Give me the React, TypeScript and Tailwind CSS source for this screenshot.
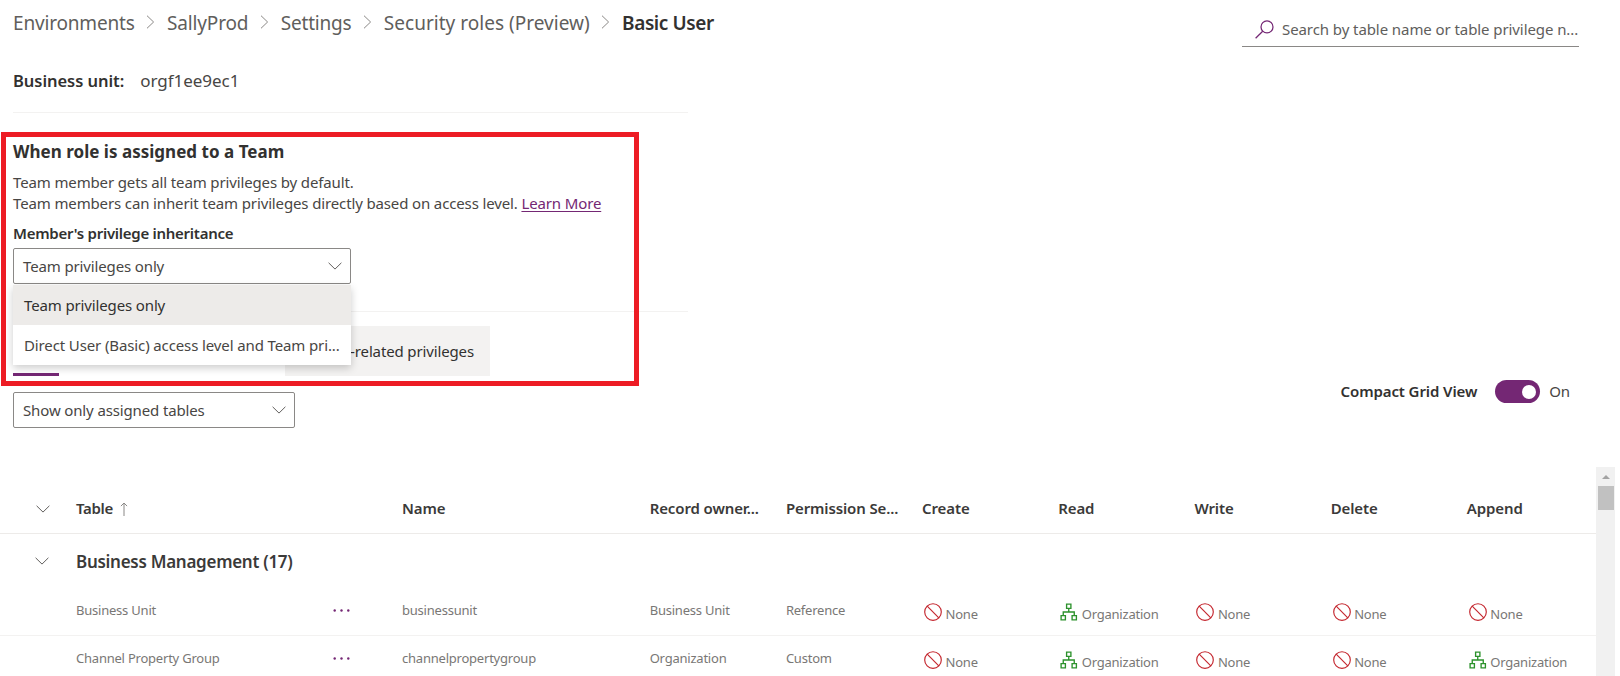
import type { ReactNode } from 'react';

type Access = 'None' | 'Organization';

interface Row {
  table: string;
  name: string;
  owner: string;
  settings: string;
  access: Access[];
}

const rows: Row[] = [
  {
    table: 'Business Unit',
    name: 'businessunit',
    owner: 'Business Unit',
    settings: 'Reference',
    access: ['None', 'Organization', 'None', 'None', 'None'],
  },
  {
    table: 'Channel Property Group',
    name: 'channelpropertygroup',
    owner: 'Organization',
    settings: 'Custom',
    access: ['None', 'Organization', 'None', 'None', 'Organization'],
  },
];

const columns = ['Name', 'Record owner...', 'Permission Se...', 'Create', 'Read', 'Write', 'Delete', 'Append'];

const gridColumns =
  'grid grid-cols-[76px_326px_247.7px_136.2px_136.2px_136.2px_136.2px_136.2px_136.2px_129px] items-center';

function ChevronRight() {
  return (
    <svg className="mx-[11.7px] mb-[2px] shrink-0" width="9" height="14" viewBox="0 0 9 14" fill="none" stroke="#8a8886">
      <path d="M1 0.7 7.6 7 1 13.3" />
    </svg>
  );
}

function ChevronDown({ className = '' }: { className?: string }) {
  return (
    <svg className={`shrink-0 ${className}`} width="14" height="8" viewBox="0 0 14 8" fill="none" stroke="#605e5c">
      <path d="M0.6 0.8 7 7.1 13.4 0.8" />
    </svg>
  );
}

function SearchIcon() {
  return (
    <svg className="shrink-0" width="19" height="19" viewBox="0 0 19 19" fill="none" stroke="#742774" strokeWidth="1.25">
      <circle cx="12" cy="6.9" r="6" />
      <path d="M7.7 11.2 0.6 18.3" />
    </svg>
  );
}

function NoneIcon() {
  return (
    <svg width="18" height="18" viewBox="0 0 18 18" fill="none" stroke="#c4262e" strokeWidth="1.15">
      <circle cx="9" cy="9" r="8.3" />
      <path d="M3.2 3.2 14.8 14.8" />
    </svg>
  );
}

function OrganizationIcon() {
  return (
    <svg width="18" height="18" viewBox="0 0 18 18" fill="none" stroke="#2c922c" strokeWidth="1.35">
      <path d="M6.6 1.1h4.3v4.3H6.6zM1.1 12.6h4.3v4.3H1.1zM12.1 12.6h4.3v4.3h-4.3z" />
      <path d="M8.75 5.4v3.6M3.25 12.6V9h11v3.6" />
    </svg>
  );
}

function AccessCell({ level }: { level: Access }) {
  return (
    <div className="flex items-center gap-[3.5px] pl-[2px]">
      {level === 'None' ? <NoneIcon /> : <OrganizationIcon />}
      <span className="pt-[6px]">{level}</span>
    </div>
  );
}

function Select({ className, children }: { className: string; children: ReactNode }) {
  return (
    <div
      className={`flex h-[36px] items-center justify-between rounded-[2px] border border-[#8a8886] bg-white pr-[8px] pl-[9px] text-[#484644] ${className}`}
    >
      {children}
      <ChevronDown />
    </div>
  );
}

export default function App() {
  return (
    <div className="relative flex h-[676px] w-[1620px] flex-col overflow-hidden bg-white font-['Noto_Sans',sans-serif] text-[15px] leading-[21px] tracking-[-0.135px] text-[#484644]">
      <header className="flex h-[47px] items-start justify-between pr-[41px] pl-[13px]">
        <nav className="flex h-[46px] items-center text-[19px] tracking-[-0.15px] whitespace-nowrap text-[#605e5c]">
          <span className="tracking-[-0.18px]">Environments</span>
          <ChevronRight />
          <span>SallyProd</span>
          <ChevronRight />
          <span className="tracking-[-0.2px]">Settings</span>
          <ChevronRight />
          <span className="tracking-[0.02px]">Security roles (Preview)</span>
          <ChevronRight />
          <span className="pt-px font-semibold tracking-[-0.4px] text-[#323130]">Basic User</span>
        </nav>
        <div className="mt-[13px] flex h-[34px] w-[337px] items-center gap-[8px] border-b border-[#8a8886] pl-[13px] whitespace-nowrap text-[#605e5c]">
          <SearchIcon />
          <span className="tracking-[-0.08px]">Search by table name or table privilege n...</span>
        </div>
      </header>

      <section className="ml-[13px] flex h-[66px] w-[675px] items-center gap-[16px] border-b border-[#f3f2f1] pt-px">
        <span className="text-[16.5px] font-semibold tracking-[-0.05px] text-[#323130]">Business unit:</span>
        <span className="text-[17px] tracking-[-0.03px]">orgf1ee9ec1</span>
      </section>

      <section className="ml-[13px] flex h-[199px] w-[675px] flex-col border-b border-[#f3f2f1] pt-[28px]">
        <h2 className="text-[17px] font-bold tracking-[0.02px] text-[#323130]">When role is assigned to a Team</h2>
        <p className="mt-[10px]">Team member gets all team privileges by default.</p>
        <p>
          Team members can inherit team privileges directly based on access level.{' '}
          <a className="text-[#742774] underline underline-offset-2">Learn More</a>
        </p>
        <div className="mt-[9px] font-semibold tracking-[-0.27px] text-[#323130]">Member's privilege inheritance</div>
        <div className="relative mt-[4px] w-[338px]">
          <Select className="w-[338px]">Team privileges only</Select>
          <div className="absolute top-[37px] left-0 z-10 w-[338px] bg-white shadow-[0_3px_8px_rgba(0,0,0,0.2)]">
            <div className="flex h-[40px] items-center bg-[#edebe9] pl-[11px] text-[#323130]">Team privileges only</div>
            <div className="flex h-[40px] items-center pl-[11px] tracking-[-0.12px] whitespace-nowrap">
              Direct User (Basic) access level and Team pri...
            </div>
          </div>
        </div>
      </section>

      <div className="mt-[14px] ml-[13px] flex h-[50px] items-stretch">
        <div className="mr-[226px] w-[46px] border-b-[3px] border-[#742774]" />
        <div className="flex w-[205px] items-center justify-end bg-[#f3f2f1] pr-[16px] text-[#323130]">
          -related privileges
        </div>
      </div>

      <div className="flex h-[91px] items-start justify-between pt-[16px] pr-[50px] pl-[13px]">
        <Select className="w-[282px]">Show only assigned tables</Select>
        <div className="-mt-[12px] flex h-[23px] items-center">
          <span className="font-semibold tracking-[-0.1px] text-[#323130]">Compact Grid View</span>
          <span className="ml-[18px] flex h-[23px] w-[45px] items-center justify-end rounded-full bg-[#742774] pr-[4px]">
            <span className="h-[14px] w-[14px] rounded-full bg-white" />
          </span>
          <span className="ml-[9px]">On</span>
        </div>
      </div>

      <div className="flex h-[209px]">
        <div className="w-[1596px] whitespace-nowrap">
          <div className={`${gridColumns} h-[67px] border-b border-[#edebe9] pt-[17px] font-semibold tracking-[-0.12px] text-[#3b3a39]`}>
            <ChevronDown className="ml-[36px]" />
            <div className="flex items-center gap-[7px]">
              <span className="tracking-[-0.3px]">Table</span>
              <svg width="8" height="14" viewBox="0 0 8 14" fill="none" stroke="#8a8886">
                <path d="M4 14V1M0.9 4.1 4 1l3.1 3.1" />
              </svg>
            </div>
            {columns.map((c) => (
              <div key={c}>{c}</div>
            ))}
          </div>
          <div className={`${gridColumns} h-[54px]`}>
            <ChevronDown className="ml-[35px]" />
            <div className="text-[17px] font-semibold tracking-[-0.28px] text-[#3b3a39]">Business Management (17)</div>
          </div>
          {rows.map((r) => (
            <div
              key={r.table}
              className={`${gridColumns} h-[48px] border-b border-[#f3f2f1] text-[13px] tracking-[-0.22px] text-[#797775]`}
            >
              <div />
              <div className="flex items-center justify-between pr-[52px] pb-[2px]">
                <span>{r.table}</span>
                <svg width="17" height="3" viewBox="0 0 17 3" fill="#742774">
                  <circle cx="1.7" cy="1.5" r="1.2" />
                  <circle cx="8.5" cy="1.5" r="1.2" />
                  <circle cx="15.3" cy="1.5" r="1.2" />
                </svg>
              </div>
              <div className="pb-[2px]">{r.name}</div>
              <div className="pb-[2px]">{r.owner}</div>
              <div className="pb-[2px]">{r.settings}</div>
              {r.access.map((a, i) => (
                <AccessCell key={i} level={a} />
              ))}
            </div>
          ))}
        </div>
        <div className="flex w-[19px] flex-col items-center bg-[#f1f1f1] pt-[8px]">
          <svg width="8" height="4" viewBox="0 0 8 4" fill="#a3a3a3">
            <path d="M0 4 4 0l4 4z" />
          </svg>
          <div className="mt-[7px] h-[24px] w-[16px] bg-[#c1c1c1]" />
        </div>
      </div>

      <div className="pointer-events-none absolute top-[132px] left-[1px] z-20 h-[254px] w-[638px] border-[5px] border-[#ed1c24]" />
    </div>
  );
}
